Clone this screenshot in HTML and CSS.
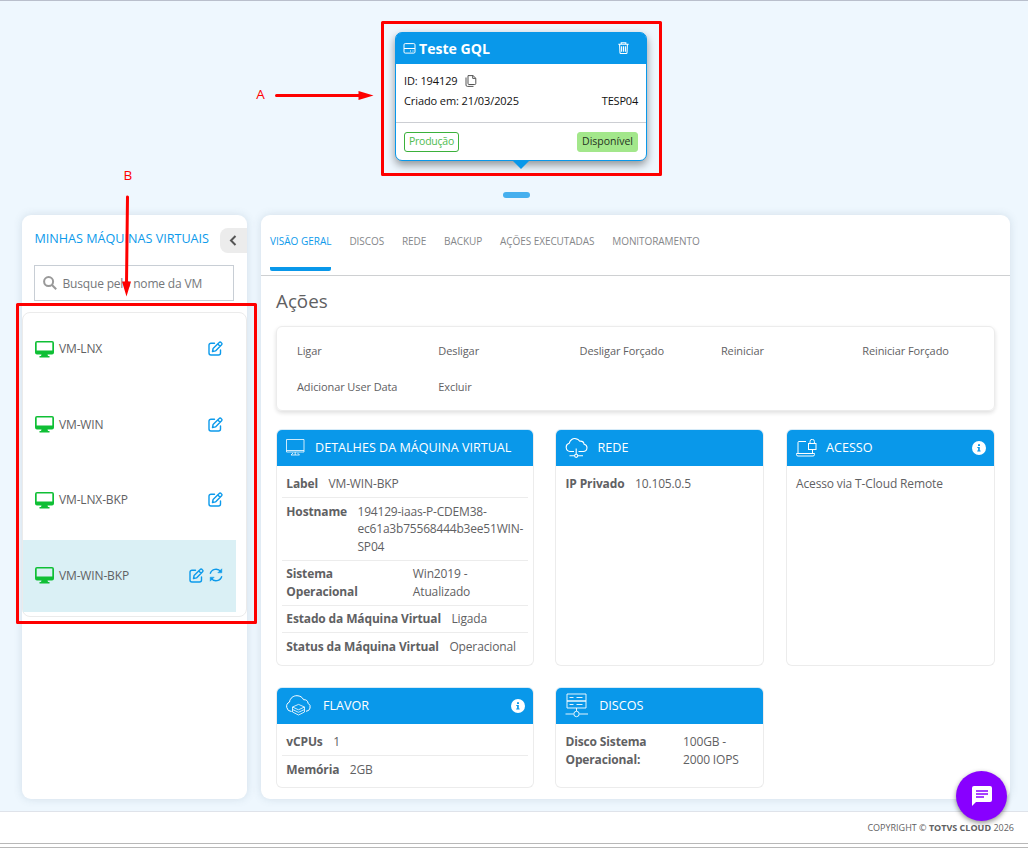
FILE: index.html
```html
<!DOCTYPE html>
<html lang="pt-BR">
<head>
<meta charset="utf-8">
<title>Minhas Máquinas Virtuais</title>
<link rel="stylesheet" href="styles.css">
</head>
<body>
<svg class="defs" aria-hidden="true">
  <symbol id="monitor" viewBox="0 0 19 17"><path fill="#0fbf35" fill-rule="evenodd" d="M2 0h15a2 2 0 0 1 2 2v9.500a2 2 0 0 1-2 2h-4.500l.5 1.500h1.500V16.500H4.500V15H6l.5-1.500H2a2 2 0 0 1-2-2V2a2 2 0 0 1 2-2zm-.3 1.600v8h15.600v-8z"/></symbol>
  <symbol id="edit" viewBox="0 0 15 15"><g fill="none" stroke="#0c9aeb" stroke-width="1.400" stroke-linejoin="round" stroke-linecap="round"><path d="M6.500 2.200H3A2 2 0 0 0 1 4.200V12a2 2 0 0 0 2 2h7.500a2 2 0 0 0 2-2V9"/><path d="M4.500 10.500l.6-3 6.100-6.100a1.300 1.300 0 0 1 1.900 0l.5.500a1.300 1.300 0 0 1 0 1.900L7.500 9.900zM9.800 2.900l2.300 2.300"/></g></symbol>
  <symbol id="info" viewBox="0 0 14 14"><circle cx="7" cy="7" r="7" fill="#fff"/><path d="M6 3.300h2v1.600H6zM5.300 6h2.500v3.500h.8v1.100H5.200V9.500h.9V7.100h-.8z" fill="#0998ea"/></symbol>
</svg>

<main class="workspace">
  <section class="carousel">
    <article class="env">
      <header class="env-head">
        <svg width="13" height="11" viewBox="0 0 13 11" fill="none" stroke="#fff"><rect x="1" y=".6" width="11" height="9.500" rx="1.200"/><path d="M1 5.500h11M7 8h1M9.500 8h1"/></svg>
        <h1>Teste GQL</h1>
        <svg class="trash" width="11" height="12" viewBox="0 0 11 12" fill="none" stroke="#fff"><path d="M.3 2.300h10.400M3.200 2V.7h4.600V2M1.600 2.500l.4 8.200a.8.800 0 0 0 .8.800h5.400a.8.800 0 0 0 .8-.8l.4-8.200M3.600 4.300v5.500M5.500 4.300v5.500M7.400 4.300v5.500" stroke-width="1.100"/></svg>
      </header>
      <div class="env-body">
        <p>ID: 194129 <svg width="12" height="12" viewBox="0 0 12 12" fill="none" stroke="#555" stroke-width="1"><path d="M3 .6h5L10.800 3.200V8.500a1 1 0 0 1-1 1H4a1 1 0 0 1-1-1zM7.700.6v2.800h3M1 2.500v7.500a1.400 1.400 0 0 0 1.400 1.400H8.500"/></svg></p>
        <p><span>Criado em: 21/03/2025</span><span class="push">TESP04</span></p>
      </div>
      <footer class="env-foot"><span class="tag tag-line">Produção</span><span class="tag tag-fill">Disponível</span></footer>
    </article>
    <span class="dot"></span>
  </section>

  <div class="panels">
    <aside class="sidebar">
      <div class="side-head">
        <h2>MINHAS MÁQUINAS VIRTUAIS</h2>
        <button class="collapse"><svg width="8" height="11" viewBox="0 0 8 11" fill="none" stroke="#555" stroke-width="2"><path d="M6.500 1L2 5.500 6.500 10"/></svg></button>
      </div>
      <label class="search"><svg width="14" height="14" viewBox="0 0 14 14" fill="none" stroke="#999" stroke-width="2"><circle cx="5.600" cy="5.600" r="4.500"/><path d="M9 9l4.200 4.200"/></svg><span>Busque pelo nome da VM</span></label>
      <ul class="vms">
        <li><svg class="mon"><use href="#monitor"/></svg>VM-LNX<svg class="ed"><use href="#edit"/></svg></li>
        <li><svg class="mon"><use href="#monitor"/></svg>VM-WIN<svg class="ed"><use href="#edit"/></svg></li>
        <li><svg class="mon"><use href="#monitor"/></svg>VM-LNX-BKP<svg class="ed"><use href="#edit"/></svg></li>
        <li class="active"><svg class="mon"><use href="#monitor"/></svg>VM-WIN-BKP<svg class="ed"><use href="#edit"/></svg><svg class="sync" width="14" height="14" viewBox="0 0 14 14" fill="none" stroke="#0c9aeb" stroke-width="1.400"><path d="M1.200 5.800A6 6 0 0 1 11.800 3.700M12.800 8.200A6 6 0 0 1 2.200 10.300"/><path d="M8.800 4.800h4V.8zM5.200 9.200h-4v4z" fill="#0c9aeb" stroke-width=".5"/></svg></li>
      </ul>
    </aside>

    <section class="content">
      <nav class="tabs"><a class="on">VISÃO GERAL</a><a>DISCOS</a><a>REDE</a><a>BACKUP</a><a>AÇÕES EXECUTADAS</a><a>MONITORAMENTO</a></nav>
      <h2 class="title">Ações</h2>
      <div class="actions"><span>Ligar</span><span>Desligar</span><span>Desligar Forçado</span><span>Reiniciar</span><span>Reiniciar Forçado</span><span>Adicionar User Data</span><span>Excluir</span></div>
      <div class="cards">
        <article class="card">
          <header><svg width="19" height="17" viewBox="0 0 19 17" fill="none" stroke="#fff"><path d="M.5.500h17.500v12.500H.5zM.5 11.500H18M7 14l-2 2h8.500l-2-2M9.200 13v3" stroke-width=".8"/></svg><h3>DETALHES DA MÁQUINA VIRTUAL</h3></header>
          <dl>
            <div><dt>Label</dt><dd>VM-WIN-BKP</dd></div>
            <div class="long"><dt>Hostname</dt><dd class="host">194129-iaas-P-CDEM38-<br>ec61a3b75568444b3ee51WIN-<br>SP04</dd></div>
            <div><dt class="w-os">Sistema<br>Operacional</dt><dd>Win2019 -<br>Atualizado</dd></div>
            <div><dt>Estado da Máquina Virtual</dt><dd>Ligada</dd></div>
            <div class="low"><dt>Status da Máquina Virtual</dt><dd>Operacional</dd></div>
          </dl>
        </article>
        <article class="card">
          <header><svg width="23" height="20" viewBox="0 0 23 20" fill="none" stroke="#fff" stroke-width="1.100"><path d="M9 13.500H5a4.200 4.200 0 0 1-.8-8.200C5 2 8 .2 10.500.6c2 .2 3.400 1 4.300 2.600 2.600-.2 4 1 4.300 3a3.700 3.700 0 0 1-.9 7.300H13.500M11.200 10.500V16M4.500 17.800h5M13 17.800h5"/><circle cx="11.200" cy="17.800" r="1.600"/></svg><h3 class="near">REDE</h3></header>
          <dl><div><dt>IP Privado</dt><dd>10.105.0.5</dd></div></dl>
        </article>
        <article class="card">
          <header><svg width="21" height="18" viewBox="0 0 21 18" fill="none" stroke="#fff"><path d="M2 14V3.500a1 1 0 0 1 1-1h7M16.500 10v4M.5 14.500h18v1a1.500 1.500 0 0 1-1.500 1.500H2a1.500 1.500 0 0 1-1.500-1.500z"/><rect x="12.500" y="4.500" width="7.500" height="6"/><path d="M14 4.500V2.500a2.200 2.200 0 0 1 4.400 0v2"/></svg><h3 class="near">ACESSO</h3><svg class="info"><use href="#info"/></svg></header>
          <dl><div><dd>Acesso via T-Cloud Remote</dd></div></dl>
        </article>
        <article class="card">
          <header><svg class="cloud" width="27" height="21" viewBox="0 0 27 21" fill="none" stroke="#fff"><path d="M6.500 16.500a5 5 0 0 1-2-9.500C5 3 8.500.6 12 .7c3 .1 5.500 1.500 6.500 4 3-.2 4.300 1.300 4.600 3.600a4.300 4.300 0 0 1-2.100 8"/><path d="M7.500 12l6-2.600L19.500 12l-6 2.800zM7.500 14.500l6 2.800 6-2.800M7.500 17l6 3 6-3M7.500 12v5M19.500 12v5" stroke-width=".8"/></svg><h3>FLAVOR</h3><svg class="info"><use href="#info"/></svg></header>
          <dl><div><dt>vCPUs</dt><dd>1</dd></div><div class="low"><dt>Memória</dt><dd>2GB</dd></div></dl>
        </article>
        <article class="card">
          <header><svg width="24" height="25" viewBox="0 0 24 25" fill="none" stroke="#fff" stroke-width=".9"><path d="M2 1h19v7H2zM2 8h19v7H2zM4.500 4.500h4M11.500 4.500h6M4.500 11.500h4M11.500 11.500h6M11.500 15v3M.5 21h8M14.500 21h8.500"/><circle cx="11.500" cy="21" r="2.700"/></svg><h3>DISCOS</h3></header>
          <dl><div><dt class="w-disk">Disco Sistema<br>Operacional:</dt><dd>100GB -<br>2000 IOPS</dd></div></dl>
        </article>
      </div>
    </section>
  </div>
</main>
<footer class="legal"><span>COPYRIGHT © <b>TOTVS CLOUD</b> 2026</span></footer>
<div class="edge"></div>

<button class="chat"><svg width="20" height="20" viewBox="0 0 20 20"><path fill="#fff" fill-rule="evenodd" d="M2 0h16a2 2 0 0 1 2 2v12a2 2 0 0 1-2 2H4l-4 4V2a2 2 0 0 1 2-2zm2 4.300v1.400h12V4.300zm0 3v1.400h12V7.300zm0 3v1.400h8v-1.400z"/></svg></button>

<svg class="notes" viewBox="0 0 1028 848">
  <g fill="none" stroke="#fe0000" stroke-width="3" stroke-linejoin="round"><path d="M382.500 22.500h278v152h-278zM17.500 304.500h238v318h-238z"/><path d="M276.500 95.500H361M127.500 197L126.500 284" stroke-linecap="round"/></g>
  <path fill="#fe0000" d="M358.500 91l15 4.500-15 4.500zM122 281.500h9l-4.500 15z"/>
  <text x="256.200" y="99">A</text><text x="123.500" y="180">B</text>
</svg>
</body>
</html>
```
FILE: styles.css
```css
* { box-sizing: border-box; margin: 0; padding: 0; }
body { width: 1028px; height: 848px; overflow: hidden; position: relative; background: #fff; color: #5f6163; font: 12px/18px "Open Sans", "Noto Sans", sans-serif; }
button { border: 0; font: inherit; }
svg { display: block; flex: none; }
.defs { position: absolute; width: 0; height: 0; }
h1, h2, h3 { font-weight: 400; }

.workspace { height: 812px; border-top: 1px solid #b9bfcc; border-bottom: 1px solid #dfe3ea; background: #eef7fe; }
.carousel { height: 214px; padding-top: 31px; display: flex; flex-direction: column; align-items: center; }
.env { position: relative; width: 252px; height: 129px; margin-left: 14px; border: 1px solid #0998ea; border-radius: 7px; background: #fff; color: #111; box-shadow: 0 4px 8px rgba(0,0,0,.4); }
.env::after { content: ""; position: absolute; left: 116px; top: 127px; border: 9px solid transparent; border-top-color: #0998ea; border-bottom: 0; }
.env-head { height: 31px; padding: 0 17px 0 7px; display: flex; align-items: center; background: #0998ea; border-radius: 5px 5px 0 0; }
.env-head h1 { margin-left: 3px; color: #fff; font-size: 14.100px; font-weight: 700; }
.env-head .trash { margin: -2px 0 0 auto; }
.env-body { height: 59px; padding: 7px 8px 0; border-bottom: 1px solid #ccced3; font-size: 11px; line-height: 20px; letter-spacing: -.1px; }
.env-body p { display: flex; align-items: center; height: 20px; }
.env-body svg { margin-left: 7px; }
.push { margin-left: auto; letter-spacing: -.2px; }
.env-foot { padding: 9px 8px; display: flex; justify-content: space-between; }
.tag { height: 20px; padding: 0 4px; border-radius: 3px; border: 1px solid #3bb13b; font: 500 10.500px/17px "Open Sans", sans-serif; letter-spacing: -.25px; }
.tag-line { color: #4fbc4f; }
.tag-fill { background: #a3e78b; border-color: #a3e78b; color: #26331f; letter-spacing: 0; }
.dot { width: 27px; height: 6px; margin: 31px 0 0 5px; border-radius: 3px; background: #45afee; }

.panels { display: flex; gap: 14px; padding-left: 22px; }
.sidebar, .content { height: 584px; background: #fff; border-radius: 9px; box-shadow: 0 0 9px rgba(70,100,125,.17); }
.sidebar { width: 225px; }
.side-head { height: 50px; padding: 13px 0 0 12.500px; display: flex; justify-content: space-between; white-space: nowrap; }
.side-head h2 { font-size: 12.600px; line-height: 22px; color: #0c9aeb; }
.collapse { width: 27px; height: 25px; padding-left: 9px; border-radius: 8px 0 0 8px; background: #ececec; }
.search { display: flex; align-items: center; gap: 5.500px; width: 200px; height: 36px; margin-left: 12px; padding-left: 8px; border: 1px solid #c8ced5; color: #74777a; letter-spacing: -.18px; }
.search span { padding-top: 1px; }
.vms { list-style: none; height: 305px; margin: 11px 0 0 0; border: 1px solid #ebebeb; border-radius: 8px; display: flex; flex-direction: column; gap: 3.670px; letter-spacing: -.15px; }
.vms li { width: 213px; height: 72px; padding: 0 13px 0 12px; display: flex; align-items: center; }
.active { background: #daf0f5; }
.mon { width: 19px; height: 17px; margin-right: 5px; }
.ed { width: 15px; height: 15px; margin: 0 0 1px auto; }
.sync { margin: 0 0 1px 5px; }

.content { width: 749px; }
.tabs { height: 61px; padding: 0 9px; display: flex; gap: 17.900px; border-bottom: 1px solid #ced0d2; color: #85878a; font-size: 10px; line-height: 52px; letter-spacing: -.07px; }
.tabs a { height: 56px; }
.tabs .on { color: #0c9aeb; letter-spacing: 0; background: linear-gradient(#0998ea, #0998ea) 0 100% / 100% 4px no-repeat; border-radius: 2px; }
.title { padding: 13px 0 0 15px; font-size: 18.800px; line-height: 24px; height: 50px; }
.actions { height: 85px; width: 719px; margin-left: 15px; padding: 6px 0 0 20px; display: grid; grid-template-columns: repeat(5, 141.300px); grid-auto-rows: 36px; align-items: center; border: 1px solid #ececec; border-radius: 6px; box-shadow: 0 2px 4px rgba(0,0,0,.13); font-size: 11px; letter-spacing: -.1px; }
.cards { margin: 18px 0 0 15px; display: grid; grid-template-columns: 257.700px 209px 209px; grid-template-rows: 237px 101px; gap: 21px 21.500px; }
.card { border: 1px solid #ececec; border-top-color: #d6ebf8; border-radius: 6px; overflow: hidden; }
.card header { height: 36px; padding: 0 9px 1px; display: flex; align-items: center; background: #0998ea; color: #fff; }
.card h3 { margin-left: 10px; font-size: 12.600px; }
.card .near { margin-left: 9.300px; }
.cloud { margin: 0 1px 0 -1px; }
.info { width: 14px; height: 14px; margin: 0 -1px 0 auto; }
.card dl { padding: 4.500px 5px 0; letter-spacing: -.14px; }
.card dl div { display: flex; gap: 10.500px; padding: 4px 4px 4px 4.300px; border-bottom: 1px solid #ececec; white-space: nowrap; }
.card dl .long { padding: 5px 4px 3px 4.300px; line-height: 17.800px; height: 63px; }
.card dl .low { padding-top: 5px; }
.card dl div:last-child { border: 0; }
.card dt { font-weight: 700; }
.host { letter-spacing: -.2px; }
.w-os { width: 116px; }
.w-disk { width: 107px; }

.legal { height: 31px; padding: 7px 14px 0 0; text-align: right; font-size: 9px; }
.edge { height: 5px; border-top: 1px solid #b8b8b8; border-bottom: 1px solid #b8b8b8; }
.chat { position: absolute; left: 956px; top: 771px; width: 51px; height: 50px; display: grid; place-items: center; border-radius: 50%; background: #8800ff; box-shadow: 0 2px 5px rgba(0,0,0,.45); }
.notes { position: absolute; left: 0; top: 0; width: 1028px; height: 848px; pointer-events: none; }
.notes text { fill: #fe0000; font: 13.500px "Open Sans", sans-serif; }
```
